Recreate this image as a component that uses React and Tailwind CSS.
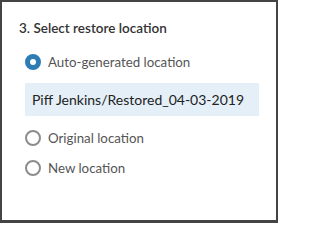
import React, { useState } from "react";

const options = [
  { id: "auto", label: "Auto-generated location" },
  { id: "original", label: "Original location" },
  { id: "new", label: "New location" },
];

function Radio({ checked, label, onSelect, className }) {
  return (
    <button
      type="button"
      onClick={onSelect}
      className={`flex items-center h-5 text-left ${className}`}
    >
      <span
        className={
          checked
            ? "w-4 h-4 rounded-full border-[5px] border-[#2d7cb4] bg-white shrink-0"
            : "w-4 h-4 rounded-full border-2 border-[#8c8c8c] bg-white shrink-0"
        }
      />
      <span className="ml-[7px] text-[13.3px] leading-5 text-[#555]">{label}</span>
    </button>
  );
}

export default function App() {
  const [selected, setSelected] = useState("auto");

  return (
    <div
      className="w-[278px] h-[223px] bg-white border-t-2 border-l-2 border-r-2 border-b-[3px] border-[#444] pt-4 px-[17px]"
      style={{ fontFamily: "Lato, 'Liberation Sans', sans-serif" }}
    >
      <h3 className="text-[13.5px] leading-5 font-semibold text-[#333] whitespace-nowrap">
        3. Select restore location
      </h3>

      <div className="flex flex-col items-start pl-[6px]">
        {/* Auto-generated */}
        <Radio
          checked={selected === "auto"}
          label={options[0].label}
          onSelect={() => setSelected("auto")}
          className="mt-[14px]"
        />
        <div className="mt-[11px] w-[234px] h-[33px] bg-[#e4eff8] flex items-center px-[7px] text-[14px] text-[#222] whitespace-nowrap">
          Piff Jenkins/Restored_04-03-2019
        </div>

        <Radio
          checked={selected === "original"}
          label={options[1].label}
          onSelect={() => setSelected("original")}
          className="mt-3"
        />
        <Radio
          checked={selected === "new"}
          label={options[2].label}
          onSelect={() => setSelected("new")}
          className="mt-[10px]"
        />
      </div>
    </div>
  );
}
